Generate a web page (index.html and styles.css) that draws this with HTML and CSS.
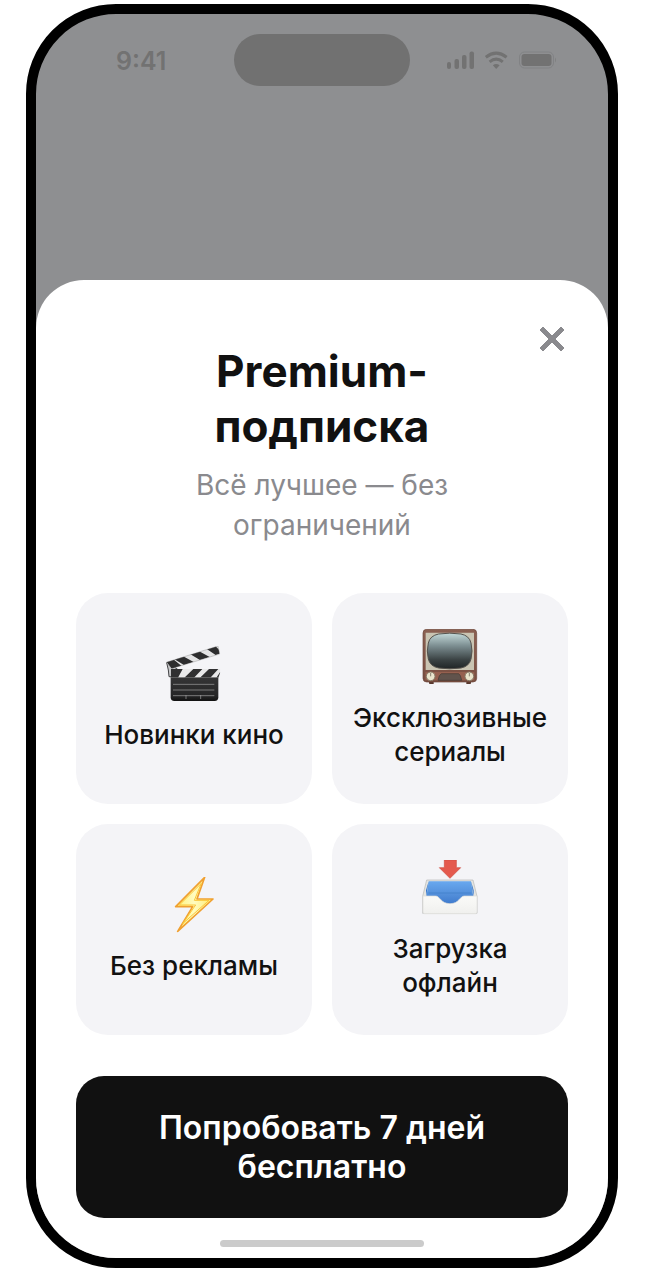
FILE: index.html
```html
<!DOCTYPE html>
<html lang="ru">
<head>
<meta charset="utf-8">
<meta name="viewport" content="width=device-width, initial-scale=1">
<title>Premium-подписка</title>
<link rel="stylesheet" href="styles.css">
</head>
<body>
<main class="phone">
  <div class="backdrop">
    <div class="status-bar">
      <span class="time">9:41</span>
      <span class="island"></span>
      <svg class="status-icons" width="112" height="18" viewBox="0 0 112 18" aria-hidden="true">
        <g fill="#727272">
          <rect x="1" y="11" width="4" height="7" rx="2"/>
          <rect x="8.500" y="8" width="4.500" height="10" rx="2"/>
          <rect x="16" y="4" width="4.500" height="14" rx="2"/>
          <rect x="23.500" y="0.500" width="4.500" height="17.500" rx="2"/>
          <path d="M39.800 6.200Q50.200 -2 60.600 6.200" fill="none" stroke="#727272" stroke-width="3"/>
          <path d="M43.600 10.800Q50.200 5.400 56.800 10.800" fill="none" stroke="#727272" stroke-width="3"/>
          <path d="M46.800 14.200q3.400-2.400 6.800 0l-3.400 3.800z"/>
          <rect x="75.500" y="3" width="30" height="12" rx="3"/>
          <path d="M109 6.500q2 2.500 0 5z" opacity=".5"/>
        </g>
        <rect x="73.500" y="1" width="34" height="16" rx="5" fill="none" stroke="#818284"/>
      </svg>
    </div>
  </div>
  <section class="sheet">
    <button class="close" type="button" aria-label="Закрыть">
      <svg width="26" height="26" viewBox="0 0 26 26" aria-hidden="true"><path d="M4 1l9 9 9-9 3 3-9 9 9 9-3 3-9-9-9 9-3-3 9-9-9-9z" fill="#8a8a8e" stroke="#8a8a8e" stroke-width="1" stroke-linejoin="round"/></svg>
    </button>
    <header class="heading">
      <h1 class="title">Premium-<br>подписка</h1>
      <p class="subtitle">Всё лучшее — без ограничений</p>
    </header>
    <ul class="features">
      <li class="card">
        <svg class="emoji" viewBox="0 0 168 168" aria-hidden="true">
          <defs>
            <linearGradient id="board" x2="0" y2="1"><stop stop-color="#353536"/><stop offset=".8" stop-color="#252526"/><stop offset="1" stop-color="#111"/></linearGradient>
            <clipPath id="arm"><path d="M1 49L156 0l5 24L16 68z"/></clipPath>
            <clipPath id="bar"><path d="M14 69H163v10l-6 16H14z"/></clipPath>
          </defs>
          <path d="M2 50l15 8 28 19-5 15H9l-2-20z" fill="#c9cacc" stroke="#454548" stroke-width="3"/>
          <circle cx="19" cy="80" r="4" fill="#777"/>
          <g clip-path="url(#arm)">
            <path d="M0 0h168v75H0z" fill="#e4e4e5"/>
            <path d="M0 46l20-8 28 23-30 8zM24 39l26-9 33 18-29 9zM72 24l26-9 33 18-29 9zM121 8l27-8 20 20-19 7z" fill="#2d2d2e"/>
          </g>
          <path d="M1 49L156 0l5 24L16 68z" fill="none" stroke="#777" stroke-width="1"/>
          <path d="M14 92h143v62q0 11-11 11H25q-11 0-11-11z" fill="url(#board)"/>
          <g clip-path="url(#bar)">
            <path d="M14 69h150v26H14z" fill="#e9e9ea"/>
            <path d="M14 95V69h36L36 95zM55 95l27-26h27L84 95zM102 95l27-26h28L133 95zM151 95l12-18v18z" fill="#303031"/>
          </g>
          <path d="M21 115h124M21 132h124M21 149h124M60 147v12M104 147v12" fill="none" stroke="#a4a4a5" stroke-width="2"/>
        </svg>
        <span>Новинки кино</span>
      </li>
      <li class="card">
        <svg class="emoji" viewBox="0 0 168 168" aria-hidden="true">
          <defs>
            <linearGradient id="screen" x2="0" y2="1"><stop stop-color="#c4dada"/><stop offset=".35" stop-color="#7d8f92"/><stop offset=".75" stop-color="#3a4243"/><stop offset="1" stop-color="#202526"/></linearGradient>
            <linearGradient id="wood" x2="0" y2="1"><stop stop-color="#8a6052"/><stop offset="1" stop-color="#794e41"/></linearGradient>
          </defs>
          <path d="M20 156h15v9H22zM133 156h15l-2 9h-13z" fill="#57372e"/>
          <rect x="3" y="1" width="161" height="158" rx="11" fill="url(#wood)" stroke="#6b4539" stroke-width="2"/>
          <path d="M11 11h145v112H11z" fill="#c9c4b2"/>
          <path d="M50 15Q83 10 117 15Q142 20 147 42Q153 66 147 90Q142 112 117 117Q83 122 50 117Q24 112 19 90Q13 66 19 42Q24 20 50 15z" fill="url(#screen)" stroke="#55524d" stroke-width="3"/>
          <path d="M10 129h147v25H10z" fill="#95604f"/>
          <path d="M58 134h52q6 3 9 20H48q3-17 10-20z" fill="#61534c" stroke="#433a35" stroke-width="2"/>
          <circle cx="26" cy="142" r="13" fill="#eae5cd" stroke="#877b68" stroke-width="3"/>
          <circle cx="142" cy="142" r="13" fill="#eae5cd" stroke="#877b68" stroke-width="3"/>
          <path d="M26 132v10M142 132v10" stroke="#888271" stroke-width="3"/>
        </svg>
        <span>Эксклюзивные сериалы</span>
      </li>
      <li class="card">
        <svg class="emoji" viewBox="0 0 168 168" aria-hidden="true">
          <defs>
            <linearGradient id="glow" x1="0" x2="1"><stop stop-color="#fff27a"/><stop offset=".5" stop-color="#fffcc0"/><stop offset="1" stop-color="#ffe96a"/></linearGradient>
          </defs>
          <path d="M116 1L29 89h51L35 163 141 66H93z" fill="url(#glow)" stroke="#f0a030" stroke-width="5" stroke-linejoin="round"/>
          <path d="M106 19L40 84h49L50 140 129 70H85z" fill="none" stroke="#fbc638" stroke-width="3"/>
        </svg>
        <span>Без рекламы</span>
      </li>
      <li class="card">
        <svg class="emoji" viewBox="0 0 168 168" aria-hidden="true">
          <defs>
            <linearGradient id="blue" x2="0" y2="1"><stop stop-color="#68a8ef"/><stop offset=".55" stop-color="#538fda"/><stop offset="1" stop-color="#3c78cc"/></linearGradient>
            <linearGradient id="tray" x2="0" y2="1"><stop stop-color="#fafaf8"/><stop offset="1" stop-color="#f0f0ee"/></linearGradient>
          </defs>
          <path d="M14 60h139l12 49v51H2v-51z" fill="#e5e5e1" stroke="#b5b6b5" stroke-width="2"/>
          <path d="M20 64h127l7 47v24H13v-24z" fill="url(#blue)"/>
          <path d="M20 64l-8 46V91zM147 64l8 46V91z" fill="#3476cc"/>
          <path d="M20 99h128" stroke="#3d7cc6" stroke-width="2"/>
          <path d="M3 108h38c13 0 15 23 43 23s29-23 43-23h38v48q0 5-5 5H8q-5 0-5-5z" fill="url(#tray)" stroke="#dcdcda" stroke-width="2"/>
          <path d="M67 0h36v23h13L84 55 52 23h15z" fill="#e45a4e" stroke="#cf4b40" stroke-width="2" stroke-linejoin="round"/>
        </svg>
        <span>Загрузка офлайн</span>
      </li>
    </ul>
    <button class="cta" type="button">Попробовать 7 дней бесплатно</button>
    <span class="home-indicator"></span>
  </section>
</main>
</body>
</html>
```
FILE: styles.css
```css
* {
  box-sizing: border-box;
}

body {
  margin: 0;
  padding: 4px 36px 9px 26px;
  background: #fff;
  color: #111;
  font-family: Inter, "Liberation Sans", sans-serif;
}

button {
  border: 0;
  font: inherit;
  cursor: pointer;
}

.phone {
  overflow: hidden;
  border: 10px solid #000;
  border-radius: 90px;
  background: #8e8f91;
}

.backdrop {
  height: 266px;
  padding: 20px 50px 0;
}

.status-bar {
  display: grid;
  grid-template-columns: 1fr 176px 1fr;
  align-items: center;
  color: #727272;
}

.time {
  padding: 2px 0 0 30px;
  font-size: 25px;
  font-weight: 600;
  line-height: 30px;
}

.island {
  height: 52px;
  border-radius: 26px;
  background: #717171;
}

.status-icons {
  justify-self: end;
}

.sheet {
  position: relative;
  display: flex;
  flex-direction: column;
  padding: 64px 40px 11px;
  border-radius: 48px 48px 0 0;
  background: #fff;
}

.close {
  position: absolute;
  top: 37px;
  right: 34px;
  display: grid;
  place-items: center;
  width: 44px;
  height: 44px;
  padding: 0;
  background: transparent;
}

.heading {
  padding: 0 100px;
  text-align: center;
}

.title {
  margin: 0 0 11px;
  font-size: 44px;
  font-weight: 700;
  line-height: 55px;
}

.subtitle {
  margin: 0;
  color: #8a8a8e;
  font-size: 28px;
  line-height: 40px;
}

.features {
  display: grid;
  grid-template-columns: 1fr 1fr;
  gap: 20px;
  margin: 48px 0 41px;
  padding: 0;
  list-style: none;
}

.card {
  display: flex;
  flex-direction: column;
  align-items: center;
  justify-content: center;
  gap: 16px;
  min-height: 211px;
  padding: 20px;
  border-radius: 32px;
  background: #f4f4f7;
  font-size: 26px;
  font-weight: 500;
  line-height: 34px;
  text-align: center;
}

.emoji {
  width: 56px;
  height: 56px;
}

.cta {
  padding: 32px 60px;
  border-radius: 28px;
  background: #111;
  color: #fff;
  font-size: 32px;
  font-weight: 600;
  line-height: 39px;
}

.home-indicator {
  align-self: center;
  width: 204px;
  height: 7px;
  margin-top: 22px;
  border-radius: 4px;
  background: #cbcbcb;
}
```
